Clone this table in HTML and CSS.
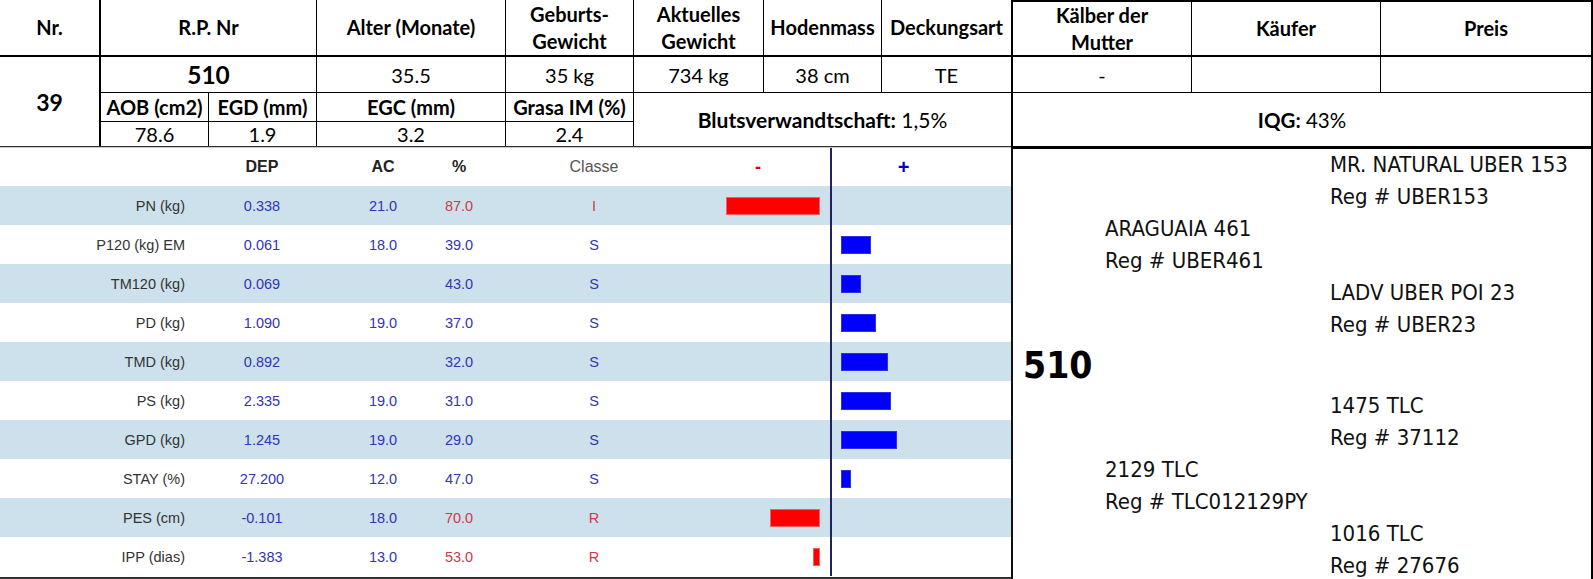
FILE: index.html
```html
<!DOCTYPE html>
<html lang="de">
<head>
<meta charset="utf-8">
<title>Bulle 510</title>
<link rel="stylesheet" href="styles.css">
</head>
<body>
<div class="page">
  <div class="sheet">
    <div class="c h">Nr.</div>
    <div class="c h s2">R.P. Nr</div>
    <div class="c h">Alter (Monate)</div>
    <div class="c h">Geburts-<br>Gewicht</div>
    <div class="c h">Aktuelles<br>Gewicht</div>
    <div class="c h">Hodenmass</div>
    <div class="c h thick-r">Deckungsart</div>
    <div class="c h top">Kälber der<br>Mutter</div>
    <div class="c h top">Käufer</div>
    <div class="c h top last">Preis</div>

    <div class="c nr">39</div>
    <div class="c s2 rp">510</div>
    <div class="c v">35.5</div>
    <div class="c v">35 kg</div>
    <div class="c v">734 kg</div>
    <div class="c v">38 cm</div>
    <div class="c v thick-r">TE</div>
    <div class="c v">-</div>
    <div class="c v"></div>
    <div class="c v last"></div>

    <div class="c sub">AOB (cm2)</div>
    <div class="c sub">EGD (mm)</div>
    <div class="c sub">EGC (mm)</div>
    <div class="c sub">Grasa IM (%)</div>
    <div class="c blut thick-r"><b>Blutsverwandtschaft:</b>&nbsp;1,5%</div>
    <div class="c iqg last"><b>IQG:</b>&nbsp;43%</div>

    <div class="c v sv">78.6</div>
    <div class="c v sv">1.9</div>
    <div class="c v sv">3.2</div>
    <div class="c v sv">2.4</div>
  </div>

  <div class="lower">
    <div class="chart">
      <div class="row head">
        <div class="lbl"></div>
        <div class="col">DEP</div>
        <div class="col">AC</div>
        <div class="col">%</div>
        <div class="col cls">Classe</div>
        <div class="neg"><span class="minus">-</span></div>
        <div class="axis"></div>
        <div class="pos"><span class="plus">+</span></div>
      </div>

      <div class="row alt">
        <div class="lbl">PN (kg)</div><div class="val">0.338</div><div class="val">21.0</div><div class="val red">87.0</div><div class="val red">I</div>
        <div class="neg"><span class="bar rbar" style="width:94px"></span></div><div class="axis"></div><div class="pos"></div>
      </div>
      <div class="row">
        <div class="lbl">P120 (kg) EM</div><div class="val">0.061</div><div class="val">18.0</div><div class="val">39.0</div><div class="val">S</div>
        <div class="neg"></div><div class="axis"></div><div class="pos"><span class="bar bbar" style="width:30px"></span></div>
      </div>
      <div class="row alt">
        <div class="lbl">TM120 (kg)</div><div class="val">0.069</div><div class="val"></div><div class="val">43.0</div><div class="val">S</div>
        <div class="neg"></div><div class="axis"></div><div class="pos"><span class="bar bbar" style="width:20px"></span></div>
      </div>
      <div class="row">
        <div class="lbl">PD (kg)</div><div class="val">1.090</div><div class="val">19.0</div><div class="val">37.0</div><div class="val">S</div>
        <div class="neg"></div><div class="axis"></div><div class="pos"><span class="bar bbar" style="width:35px"></span></div>
      </div>
      <div class="row alt">
        <div class="lbl">TMD (kg)</div><div class="val">0.892</div><div class="val"></div><div class="val">32.0</div><div class="val">S</div>
        <div class="neg"></div><div class="axis"></div><div class="pos"><span class="bar bbar" style="width:47px"></span></div>
      </div>
      <div class="row">
        <div class="lbl">PS (kg)</div><div class="val">2.335</div><div class="val">19.0</div><div class="val">31.0</div><div class="val">S</div>
        <div class="neg"></div><div class="axis"></div><div class="pos"><span class="bar bbar" style="width:50px"></span></div>
      </div>
      <div class="row alt">
        <div class="lbl">GPD (kg)</div><div class="val">1.245</div><div class="val">19.0</div><div class="val">29.0</div><div class="val">S</div>
        <div class="neg"></div><div class="axis"></div><div class="pos"><span class="bar bbar" style="width:56px"></span></div>
      </div>
      <div class="row">
        <div class="lbl">STAY (%)</div><div class="val">27.200</div><div class="val">12.0</div><div class="val">47.0</div><div class="val">S</div>
        <div class="neg"></div><div class="axis"></div><div class="pos"><span class="bar bbar" style="width:10px"></span></div>
      </div>
      <div class="row alt">
        <div class="lbl">PES (cm)</div><div class="val">-0.101</div><div class="val">18.0</div><div class="val red">70.0</div><div class="val red">R</div>
        <div class="neg"><span class="bar rbar" style="width:50px"></span></div><div class="axis"></div><div class="pos"></div>
      </div>
      <div class="row">
        <div class="lbl">IPP (dias)</div><div class="val">-1.383</div><div class="val">13.0</div><div class="val red">53.0</div><div class="val red">R</div>
        <div class="neg"><span class="bar rbar" style="width:7px"></span></div><div class="axis"></div><div class="pos"></div>
      </div>
    </div>

    <div class="ped">
      <div class="pn g1"><div>MR. NATURAL UBER 153</div><div>Reg # UBER153</div></div>
      <div class="pn p1"><div>ARAGUAIA 461</div><div>Reg # UBER461</div></div>
      <div class="pn g2"><div>LADV UBER POI 23</div><div>Reg # UBER23</div></div>
      <div class="self">510</div>
      <div class="pn g3"><div>1475 TLC</div><div>Reg # 37112</div></div>
      <div class="pn p2"><div>2129 TLC</div><div>Reg # TLC012129PY</div></div>
      <div class="pn g4"><div>1016 TLC</div><div>Reg # 27676</div></div>
    </div>
  </div>
</div>
</body>
</html>
```

FILE: styles.css
```css
* { box-sizing: border-box; }
html, body { margin: 0; padding: 0; background: #fff; }
.page { width: 1593px; height: 579px; overflow: hidden; }

/* top sheet */
.sheet {
  display: grid;
  grid-template-columns: 101px 108px 108px 189px 128px 130px 118px 131px 179px 189px 212px;
  grid-template-rows: 57px 36px 29px 24px;
  font-family: Lato, "Open Sans", sans-serif;
  color: #000;
}
.c {
  border-right: 1px solid #000;
  border-bottom: 1px solid #000;
  display: flex;
  align-items: center;
  justify-content: center;
  text-align: center;
  font-size: 20px;
  line-height: 22px;
  white-space: nowrap;
}
.h { font-weight: 700; border-bottom-width: 2px; line-height: 27px; }
.h:first-child { border-right-width: 2px; }
.s2 { grid-column: span 2; }
.top { border-top: 2px solid #000; }
.last { border-right-width: 2px; }
.thick-r { border-right-width: 2px; }
.nr { grid-column: 1; grid-row: 2 / 5; border-right-width: 2px; border-bottom: 0; font-weight: 700; font-size: 23px; }
.rp { font-weight: 700; font-size: 24.5px; }
.sub { font-weight: 700; }
.sv { border-bottom: 0; }
.blut { grid-column: 6 / 9; grid-row: 3 / 5; border-bottom: 0; font-size: 21px; }
.iqg { grid-column: 9 / 12; grid-row: 3 / 5; border-bottom: 0; font-size: 20.5px; }
.blut b, .iqg b { font-weight: 700; }

/* lower area */
.lower { display: flex; height: 433px; }
.chart {
  width: 1011px;
  border-top: 1px solid #333;
  border-bottom: 2px solid #333;
  font-family: "Liberation Sans", Arial, sans-serif;
}
.row {
  display: grid;
  grid-template-columns: 196px 132px 110px 42px 228px 122px 2px 179px;
  height: 39px;
  align-items: center;
  font-size: 14.5px;
}
.row.head { border-top: 1px solid #c8c8c8; }
.row.alt { background: #cce1ec; }
.lbl { text-align: right; padding-right: 11px; color: #333; white-space: nowrap; }
.val { text-align: center; color: #3434b4; }
.val.red { color: #cc3a44; }
.col { text-align: center; font-weight: 700; font-size: 16px; color: #222; }
.col.cls { font-weight: 400; color: #555; }
.axis { align-self: stretch; background: #22225e; }
.neg { display: flex; justify-content: flex-end; padding-right: 10px; }
.pos { display: flex; justify-content: flex-start; padding-left: 9px; }
.head .neg { justify-content: center; padding-right: 22px; padding-left: 0; }
.head .pos { justify-content: center; padding-left: 0; padding-right: 36px; }
.minus { color: #e00000; font-weight: 700; font-size: 18px; }
.plus { color: #0000d0; font-weight: 700; font-size: 20px; }
.bar { display: block; height: 18px; }
.rbar { background: #ff0000; border: 1px solid #f06060; }
.bbar { background: #0000ff; border: 1px solid #3030e0; }

/* pedigree */
.ped {
  flex: 1;
  border-left: 2px solid #111;
  border-right: 2px solid #000;
  border-top: 3px solid #000;
  display: grid;
  grid-template-columns: 92px 225px 1fr;
  grid-template-rows: repeat(6, 32px) 49px repeat(6, 32px);
  font-family: "DejaVu Sans Condensed", "DejaVu Sans", sans-serif;
  font-size: 22px;
  color: #111;
  overflow: hidden;
}
.pn { line-height: 32px; white-space: nowrap; }
.g1 { grid-column: 3; grid-row: 1 / 3; }
.p1 { grid-column: 2; grid-row: 3 / 5; }
.g2 { grid-column: 3; grid-row: 5 / 7; }
.self { grid-column: 1 / 3; grid-row: 7; align-self: center; padding-left: 10px; font-weight: 700; font-size: 37px; line-height: 40px; color: #000; }
.g3 { grid-column: 3; grid-row: 8 / 10; }
.p2 { grid-column: 2; grid-row: 10 / 12; }
.g4 { grid-column: 3; grid-row: 12 / 14; }
```
